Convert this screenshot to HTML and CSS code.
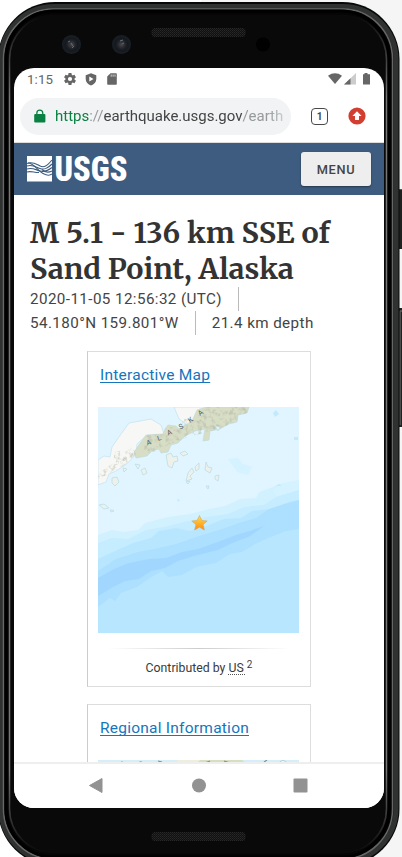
FILE: index.html
```html
<!DOCTYPE html>
<html lang="en">
<head>
<meta charset="utf-8">
<title>M 5.1 - 136 km SSE of Sand Point, Alaska</title>
<link rel="stylesheet" href="styles.css">
</head>
<body>
<div class="stage">
  <svg class="frame" viewBox="0 0 402 857" width="402" height="857" aria-hidden="true">
    <defs>
      <pattern id="grille" width="2" height="2" patternUnits="userSpaceOnUse">
        <rect width="2" height="2" fill="#101010"/><rect width="1" height="1" fill="#282828"/><rect x="1" y="1" width="1" height="1" fill="#202020"/>
      </pattern>
      <radialGradient id="lens"><stop offset="0" stop-color="#44474c"/><stop offset=".45" stop-color="#202226"/><stop offset=".65" stop-color="#15191f"/><stop offset="1" stop-color="#192027"/></radialGradient>
      <linearGradient id="rim" x2="0" y2="1"><stop offset="0" stop-color="#777" stop-opacity="0"/><stop offset=".1" stop-color="#777"/><stop offset=".9" stop-color="#777"/><stop offset="1" stop-color="#777" stop-opacity="0"/></linearGradient>
    </defs>
    <rect x="398" y="189" width="6" height="60" fill="#202222"/>
    <rect x="399" y="189" width="4" height="1" fill="#555"/>
    <rect x="398" y="308" width="6" height="119" fill="#202222"/>
    <path d="M400 425V311h2" fill="none" stroke="#777"/>
    <rect x="-2" y="2" width="401.5" height="864" rx="57" fill="#080808"/>
    <rect x="1" y="6.5" width="395" height="855" rx="53" fill="none" stroke="#303232" stroke-width="5"/>
    <rect x="3.5" y="9" width="389" height="850" rx="50" fill="#050505" stroke="#666" stroke-width="1.5"/>
    <rect x="6" y="11" width="383" height="846" rx="48" fill="#050505" stroke="#000" stroke-width="3"/>
    <rect x="9.5" y="14.5" width="377" height="839" rx="45" fill="#090909" stroke="url(#rim)" stroke-width="1.5"/>
    <rect x="151.500" y="28" width="94" height="9" rx="3.500" fill="url(#grille)"/>
    <rect x="151.500" y="832" width="94" height="9" rx="3.500" fill="url(#grille)"/>
    <circle cx="71.500" cy="44.500" r="9.500" fill="url(#lens)"/>
    <circle cx="121.500" cy="44.500" r="9.500" fill="url(#lens)"/>
    <path d="M68 42l2-1M74 46l-2 2M71 43l2 3M120 41l3-1M122 44l2-1" stroke="#666b74" stroke-width="1"/>
    <circle cx="263" cy="44.500" r="7" fill="#010101"/>
  </svg>

  <div class="screen">
    <div class="status">
      <span class="clock">1:15</span>
      <svg class="gear" viewBox="2 2 20 20" width="12" height="12"><path fill="#666" fill-rule="evenodd" d="M19.430 12.980c.04-.32.07-.64.07-.98s-.03-.66-.07-.98l2.110-1.650c.19-.15.24-.42.12-.64l-2-3.460c-.12-.22-.39-.3-.61-.22l-2.490 1c-.52-.4-1.080-.73-1.690-.98l-.38-2.650C14.460 2.180 14.250 2 14 2h-4c-.25 0-.46.18-.49.42l-.38 2.650c-.61.25-1.170.59-1.690.98l-2.490-1c-.23-.09-.49 0-.61.22l-2 3.460c-.13.22-.07.49.12.64l2.110 1.650c-.04.32-.07.65-.07.98s.03.66.07.98l-2.110 1.650c-.19.15-.24.42-.12.64l2 3.460c.12.22.39.3.61.22l2.490-1c.52.4 1.080.73 1.690.98l.38 2.650c.03.24.24.42.49.42h4c.25 0 .46-.18.49-.42l.38-2.650c.61-.25 1.170-.59 1.690-.98l2.490 1c.23.09.49 0 .61-.22l2-3.460c.12-.22.07-.49-.12-.64zM12 15.500a3.500 3.500 0 1 1 0-7 3.500 3.500 0 0 1 0 7z"/></svg>
      <svg class="shield" viewBox="0 0 12 13" width="12" height="13"><path fill="#666" fill-rule="evenodd" d="M6 .3 11.300 2.300V6c0 3-2.200 5.500-5.300 6.600C2.900 11.500.7 9 .7 6V2.300zM4.300 3.600v5l4.200-2.500z"/></svg>
      <svg class="sd" viewBox="0 0 10 12" width="10" height="12"><path fill="#666" d="M3.500.3H9q.8 0 .8.800v9.800q0 .8-.8.800H1q-.8 0-.8-.8V3.600z"/><path stroke="#fff" stroke-width=".7" d="M4.200 1.500v2.200M6.100 1.500v2.200M8 1.500v2.200"/></svg>
      <span class="grow"></span>
      <svg viewBox="0 0 43 12" width="43" height="12"><path fill="#666" d="M0 2.700Q7-2.100 14 2.700L7 11z"/><path fill="#ccc" d="M28 0v11.500H16z"/><path fill="#666" d="M22.500 5.300v6.200H16z"/><path fill="#666" d="M36.500 0h3v1.300H42v10.200h-7V1.300h1.500z"/></svg>
    </div>
    <div class="toolbar">
      <div class="pill">
        <svg viewBox="0 0 12 14" width="12" height="14"><path fill="#0b8043" d="M1.200 5H2.200V4a3.600 3.600 0 0 1 7.200 0v1h1q1 0 1 1v6.500q0 1-1 1H1.200q-1 0-1-1V6q0-1 1-1zM3.500 5h4.600V4a2.300 2.300 0 0 0-4.600 0z"/></svg>
        <span class="url"><span class="proto">https</span><span class="dim">://</span>earthquake.usgs.gov<span class="dim">/earth</span></span>
      </div>
      <span class="tabs">1</span>
      <svg class="update" viewBox="0 0 18 18" width="18" height="18"><circle cx="9" cy="9" r="8.600" fill="#d23f31"/><path fill="#fff" d="M9 4.200 13.600 9H11v4H7V9H4.400z"/></svg>
    </div>
    <header class="site">
      <svg class="logo" viewBox="0 0 104 28" width="104" height="28">
        <path fill="#fff" d="M0 1h25v25.500H0z"/>
        <g fill="none" stroke="#3d5c7f" stroke-width="1.100"><path d="M0 8.500C5 6 9 9 13 11S20 11 25 5"/><path d="M0 11C5 9 9 12 13 13.500S20 14 25 9"/><path d="M0 14C5 12 9 15 13 16S20 16.500 25 12.500"/><path d="M0 17C4 15.500 8 18 12 17.500"/><path d="M1 8C7 8 11 16 16 18.500S22 20.500 25 19"/><path d="M15 14.500C18 17.500 21 18 25 16"/></g>
        <text x="27.500" y="26.400" textLength="73" lengthAdjust="spacingAndGlyphs" class="logo-text">USGS</text>
      </svg>
      <button class="menu">MENU</button>
    </header>
    <main class="content">
      <h1><span class="line1">M 5.1 - 136 km SSE of</span><br><span class="line2">Sand Point, Alaska</span></h1>
      <ul class="meta"><li>2020-11-05 12:56:32 (UTC)</li><li>54.180°N 159.801°W</li><li>21.4 km depth</li></ul>
      <section class="card">
        <h2><a>Interactive Map</a></h2>
        <svg class="map" viewBox="0 0 201 226" width="201" height="226">
          <defs>
            <linearGradient id="star" x2="0" y2="1"><stop offset="0" stop-color="#ffdf4d"/><stop offset="1" stop-color="#ff8a0c"/></linearGradient>
            <filter id="relief" x="0" y="0" width="1" height="1"><feTurbulence type="fractalNoise" baseFrequency=".22" numOctaves="3" seed="4" result="n"/><feColorMatrix in="n" values="0 0 0 0 .5  0 0 0 0 .52  0 0 0 0 .42  2.400 0 0 0 -1.100"/><feComposite in2="SourceGraphic" operator="in"/></filter>
          </defs>
          <path fill="#e0f5ff" d="M0 0h201v226H0z"/>
          <path fill="#d2f1ff" d="M0 128 14 123 25 125 40 123 47 116 62 112 70 110 92 107 111 102 127 99 142 92 158 91 161 85 175 80 180 77 193 76 201 73V226H0z"/>
          <path fill="#d4f2ff" d="m130 52 10-1 5 6 9 3-4 8-11-3zM175 83l10-7 16-3v15l-20 6z"/>
          <path fill="#c5ecff" d="m0 136 14-5 16 1 18-9 18-3 20-5 22-5 22-3 16-7 20-2 12-8 23-7V226H0z"/>
          <path fill="#b9e6ff" d="m0 152 17-8 18-8 18-5 8-7 17-3 14 3 16-5 18-7 17-1 11-7 18-2 19-7 10-2V226H0z"/>
          <path fill="#addfff" d="m0 164 18-12 22-7 16-3 22-5 20-7 26-8 20-7 14-4 13-9 16-5 14-4v29l-13 2-18 7-13 6-13 8-12 2-14 9-20 4-14 8-14 2-6-6-12 7-13 9-16 6-6 8-5-3-12 9z"/>
          <path fill="#a1d6ff" d="M0 189V171l16-9 15-6 20-4 17-1 16-6 16-3 20-7 18-7 14-4 14-5-14 10-20 8-12 6-24 6-16 5-13 7-14 3-12 8-14 2-12 6z"/>
          <path fill="#c6ecff" d="m0 145 6-5 11-1-5 4-8 5z"/>
          <path fill="#f7f7f5" stroke="#c2e2ef" stroke-width=".7" d="M12 50 14 40 23 27 31 16 42 14 53 12 63 18 66 27 57 29 48 29 39 37 38 47 30 56 18 64 11 67 8 75 0 78V53l6-4zM76 0h60l-10 10-20 7-14 8-4-8-7-5z"/>
          <path fill="#d7dec5" stroke="#bed8d8" stroke-width=".6" d="M48 28 65 27 67 22 70 18 78 19 81 22 94 14 99 3 108 0h43l-2 6-9 2-1 7-9 2-8 5-10 2-1 9-6 1 2-12-10 2-10 5-7 7-7 2-3 7-7 1-2-4-7 2-5 5-11 2-2-6z"/>
          <path filter="url(#relief)" d="M48 28 65 27 67 22 78 19 94 14 108 0h43l-2 6-9 2-1 7-17 6-12 4-20 5-18 7-14 7-13 3zM17 45l18-5 3 8-14 12-24 12v-5l15-11zM84 12l14 0-6 10-8-3z"/>
          <g fill="#edf1e9" stroke="#bbdde6" stroke-width=".8"><path d="m68 48 5-2 2 4 4-1 1 5-4 1-2 6-4-2zM82 46l5-2 3 3-5 2zM14 71l5-1 2 5-4 4-3-3zM37 57l5 1-2 4zM43 63l4-2 2 5-4 2zM90 66l4-5 2 4-4 4 2 3-6 2zM97 60l4-4 0 6-3 2zM108 55l2 5 4 1-2 5-5-3zM88 75l4-1-2 3zM117 69l4-1-1 6-3-2zM1 98l5-1 5 4-5 1zM12 103l3 0 1 1-3 1zM25 61l4 1-3 3zM108 79l3 0-1 3zM117 19l5 1-2 4z"/></g>
          <g class="alaska"><text x="49" y="38.500" transform="rotate(-18 49 38)">A</text><text x="60" y="34" transform="rotate(-20 60 33)">L</text><text x="70" y="28.500" transform="rotate(-24 70 28)">A</text><text x="82" y="22.500" transform="rotate(-28 82 22)">S</text><text x="92" y="16" transform="rotate(-35 92 16)">K</text><text x="102" y="9" transform="rotate(-36 102 9)">A</text></g>
          <g fill="#c3e9ff"><path d="m175 6 3-3 3 4-4 3zM178 79l3-2 3 2zM196 30h4v3h-4zM79 92l3 1-2 2z"/></g>
          <path fill="url(#star)" stroke="#d3a65a" stroke-width=".6" d="m101.500 108.500 2.300 5 5.400.5-4.100 3.500 1.300 5.500-4.900-2.800-4.900 2.800 1.300-5.500-4.100-3.500 5.400-.5z"/>
        </svg>
        <div class="rule"></div>
        <p>Contributed by <abbr>US&nbsp;</abbr><sup>2</sup></p>
      </section>
      <section class="card">
        <h2><a>Regional Information</a></h2>
        <svg class="map" viewBox="0 0 201 226" width="201" height="226"><path fill="#d5effa" d="M0 0h201v226H0z"/><path fill="#eeeedf" d="M80 0h24l-6 8H74z"/><path fill="#d7dfc1" d="M102 0h42l5 4-5 5H94z"/><path d="m21 4 3-2 2 2M39 3l4-1 4 2M60 1l4 1M107 3l5-2M126 1l6 2M169 0l-3 2" stroke="#83918e" stroke-width="1.200" fill="none"/><circle cx="185" cy="4" r="3.500" fill="#fff" stroke="#b5c8ce"/></svg>
      </section>
    </main>
    <nav class="navbar">
      <svg viewBox="0 0 370 44" width="370" height="44" fill="#929292"><path d="M75.500 21.500 88 14.500v14z" stroke="#929292" stroke-linejoin="round"/><circle cx="185" cy="21.500" r="7"/><rect x="279.500" y="14.500" width="14" height="14" rx="1"/></svg>
    </nav>
  </div>
</div>
</body>
</html>
```

FILE: styles.css
```css
* { box-sizing: border-box; }
html, body { margin: 0; overflow: hidden; }
body { font-family: Roboto, "Liberation Sans", sans-serif; color: #444; background: #fff; }
.stage { position: relative; width: 402px; height: 857px; padding: 68px 0 0 14px; overflow: hidden; background: linear-gradient(90deg, #fff 50%, #f5f5f5 50%); }
.frame { position: absolute; left: 0; top: 0; }
.screen { position: relative; width: 370px; height: 740px; display: flex; flex-direction: column; overflow: hidden; background: #fff; border-radius: 20px; }
.status { flex: none; height: 22px; display: flex; align-items: center; padding: 0 13px 0 13px; }
.clock { width: 37px; font-size: 13.3px; letter-spacing: .1px; color: #666; }
.shield { margin-left: 9px; }
.sd { margin-left: 10px; }
.grow { flex: 1; }
.toolbar { flex: none; height: 53px; display: flex; align-items: center; padding: 0 18px 0 6px; border-bottom: 1px solid #ddd; }
.pill { width: 271px; height: 37px; display: flex; align-items: center; gap: 9px; padding: 0 7px 0 14px; border-radius: 19px; background: #f1f3f4; }
.pill svg { flex: none; }
.url { flex: 1; overflow: hidden; white-space: nowrap; font-size: 15px; line-height: 20px; letter-spacing: -.02px; -webkit-mask-image: linear-gradient(90deg, #000 93%, rgba(0,0,0,.4)); }
.proto { color: #0b8043; }
.dim { color: #979a9c; }
.tabs { width: 17px; height: 17px; margin-left: 20px; border: 1.500px solid #46494c; border-radius: 4px; font-size: 10px; font-weight: 700; line-height: 15px; text-align: center; color: #46494c; }
.update { margin-left: auto; }
.site { flex: none; height: 52px; display: flex; align-items: center; justify-content: space-between; padding: 0 13px; background: #3d5c7f; }
.logo { overflow: visible; }
.logo-text { font: 900 35.500px "Roboto Condensed", Roboto, sans-serif; fill: #fff; }
.menu { width: 70px; height: 34px; padding: 0; border: 0; border-radius: 3px; background: #eee; box-shadow: 0 1px 2px rgba(0,0,0,.4); color: #444; font: 500 12.8px Roboto, sans-serif; letter-spacing: .7px; }
.content { flex: 1; min-height: 0; overflow: hidden; padding: 20px 16px 0; }
h1 { margin: 0; white-space: nowrap; color: #333; font: 700 28.7px/36px Merriweather, "Noto Serif", "DejaVu Serif Condensed", "DejaVu Serif", serif; }
.line1 { letter-spacing: .08px; }
.meta { list-style: none; display: flex; flex-wrap: wrap; margin: 0; padding: 0; font-size: 15.2px; line-height: 24px; letter-spacing: .41px; }
.meta li:not(:last-child) { padding-right: 16px; margin-right: 16px; border-right: 1px solid #bbb; }
.card { width: 224px; height: 336px; margin: 16px 0 17px 57px; padding: 0 10px; border: 1px solid #ddd; border-left-color: #ccc; }
h2 { margin: 0; height: 55px; padding: 12px 0 0 2px; font-size: 15.5px; font-weight: 400; line-height: 23px; letter-spacing: .24px; }
h2 a { color: #1476bd; text-decoration: underline; text-underline-offset: 2px; text-decoration-thickness: 1px; text-decoration-skip-ink: none; }
.map { display: block; }
.alaska { font: 7px Roboto, sans-serif; fill: #555; }
.rule { height: 1px; margin: 15px 10px 0; background: linear-gradient(90deg, transparent, #ccc, transparent); }
.card p { margin: 9px 0 0; text-align: center; font-size: 12.3px; line-height: 20px; color: #3a3a3a; }
abbr { text-decoration: underline dotted #555; text-underline-offset: 2px; }
sup { font-size: 10px; line-height: 0; vertical-align: 4px; }
.navbar { flex: none; height: 46px; border-top: 2px solid #eee; background: #fff; }
```
